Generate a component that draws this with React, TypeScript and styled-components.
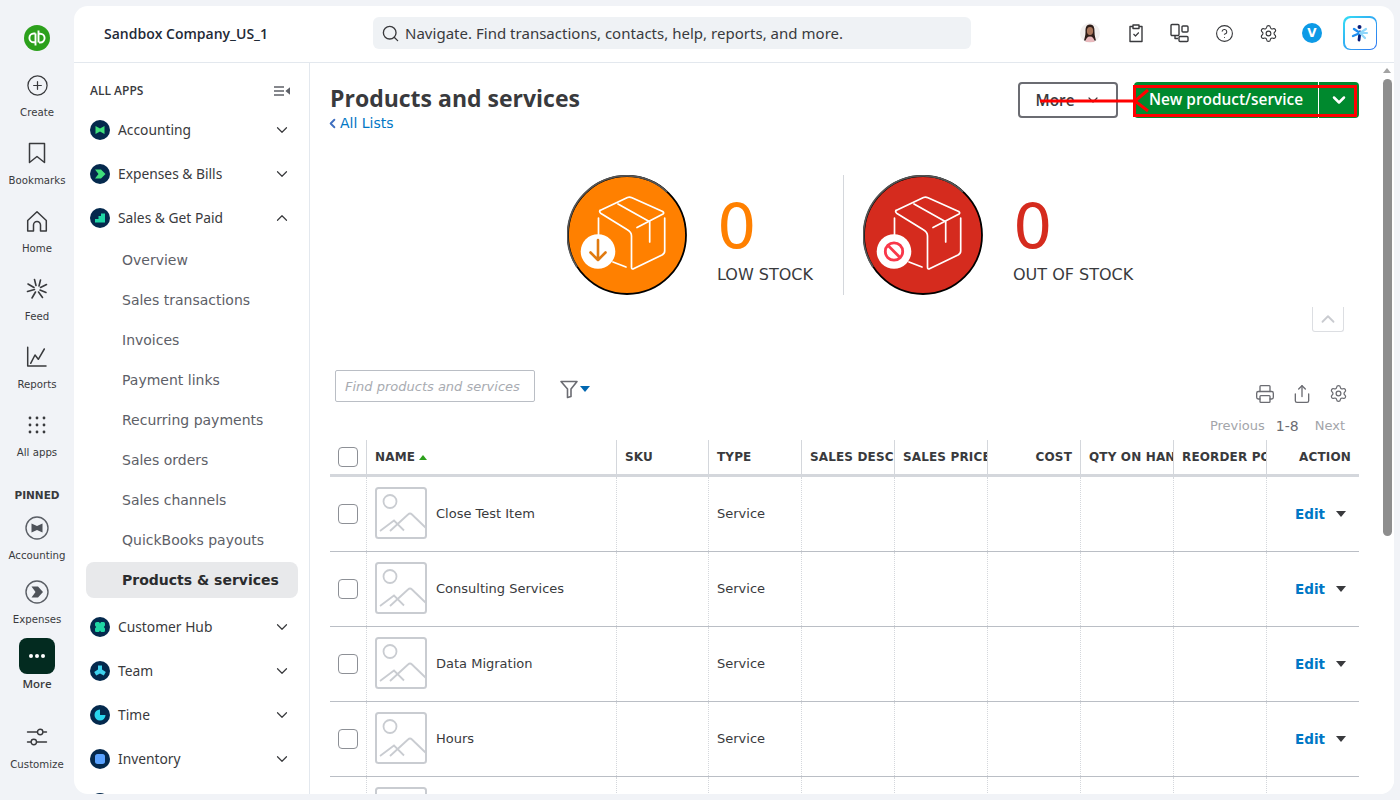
import * as React from 'react'
import styled, { createGlobalStyle } from 'styled-components'
import { ChevronDown, ChevronUp, ChevronLeft, PlusCircle, Settings, HelpCircle, Printer, Share, Search } from 'lucide-react'

const GlobalStyle = createGlobalStyle`
  html, body { margin: 0; padding: 0; height: 100%; overflow: hidden; background: #f1f3f7; }
  * { box-sizing: border-box; }
  #root { height: 800px; }
`

const Page = styled.div`
  display: flex;
  width: 1400px;
  height: 800px;
  padding: 6px 6px 6px 0;
  background: #f1f3f7;
  font-family: "DejaVu Sans", sans-serif;
  color: #393a3d;
`

const Rail = styled.nav`
  width: 74px;
  flex: none;
  display: flex;
  flex-direction: column;
  align-items: center;
`

const Logo = styled.div`
  margin: 19px 0 17px;
  width: 26px;
  height: 26px;
`

const RailItem = styled.div<{ $h?: number }>`
  height: ${p => p.$h ?? 68}px;
  width: 74px;
  flex: none;
  display: flex;
  flex-direction: column;
  align-items: center;
  color: #393a3d;
  svg { display: block; }
`

const RailIcon = styled.div`
  height: 34px;
  display: flex;
  align-items: center;
  justify-content: center;
`

const RailLabel = styled.span<{ $bold?: boolean }>`
  font-size: ${p => (p.$bold ? 11.5 : 10.2)}px;
  font-family: ${p => (p.$bold ? '"Open Sans"' : '"DejaVu Sans"')}, sans-serif;
  font-weight: ${p => (p.$bold ? 600 : 400)};
  line-height: 14px;
  margin-top: ${p => (p.$bold ? 3 : 4)}px;
  white-space: nowrap;
`

const PinnedTitle = styled.div`
  font-size: 10.5px;
  font-weight: 700;
  line-height: 14px;
  margin: 18px 0 9px;
`

const MoreTile = styled.div`
  width: 36px;
  height: 36px;
  flex: none;
  border-radius: 8px;
  background: #032b20;
  display: flex;
  align-items: center;
  justify-content: center;
  gap: 2px;
`

const Dot = styled.i`
  width: 4px;
  height: 4px;
  border-radius: 50%;
  background: #fff;
`

const Card = styled.div`
  flex: 1;
  min-width: 0;
  display: flex;
  flex-direction: column;
  background: #fff;
  border-radius: 14px;
  overflow: hidden;
`

const Header = styled.header`
  height: 57px;
  flex: none;
  display: flex;
  align-items: center;
  border-bottom: 1px solid #e3e8ee;
`

const Company = styled.div`
  width: 299px;
  flex: none;
  padding: 0 0 0 30px;
  margin-top: -2px;
  font-family: "Open Sans", sans-serif;
  font-size: 14px;
  font-weight: 600;
  color: #1f2a37;
`

const SearchBar = styled.div`
  width: 598px;
  height: 32px;
  margin-top: -2px;
  border-radius: 6px;
  background: #eff2f5;
  display: flex;
  align-items: center;
  gap: 5px;
  padding: 0 8px;
  font-family: "Noto Sans", sans-serif;
  font-size: 15px;
  letter-spacing: 0.02px;
  color: #393a3d;
`

const HeaderIcons = styled.div`
  display: flex;
  align-items: center;
  margin-left: auto;
  padding-right: 8px;
  margin-top: -2px;
`

const HeaderIcon = styled.div<{ $w?: number }>`
  width: ${p => p.$w ?? 44}px;
  display: flex;
  justify-content: center;
  align-items: center;
  color: #393a3d;
`

const AvatarV = styled.div`
  width: 20px;
  height: 20px;
  border-radius: 50%;
  background: #0d9ae6;
  color: #fff;
  font-size: 12px;
  font-weight: 700;
  display: flex;
  align-items: center;
  justify-content: center;
`

const AiTile = styled.div`
  width: 34px;
  height: 34px;
  border-radius: 7px;
  padding: 1.5px;
  background: linear-gradient(135deg, #35e0f5, #2d72f0);
  div {
    width: 100%;
    height: 100%;
    background: #fff;
    border-radius: 6px;
    display: flex;
    align-items: center;
    justify-content: center;
  }
`

const Body = styled.div`
  flex: 1;
  min-height: 0;
  display: flex;
`

const Side = styled.aside`
  width: 236px;
  flex: none;
  border-right: 1px solid #e3e8ee;
  overflow: hidden;
  padding: 0 11px 0 12px;
`

const SideTop = styled.div`
  height: 45px;
  padding: 21px 8px 0 4px;
  display: flex;
  align-items: flex-start;
  justify-content: space-between;
  font-family: "Open Sans", sans-serif;
  font-size: 12px;
  line-height: 14px;
  font-weight: 600;
  color: #393a3d;
`

const AppRow = styled.div`
  height: 44px;
  display: flex;
  align-items: center;
  gap: 8px;
  padding: 0 7px 0 4px;
  font-family: "Noto Sans", sans-serif;
  font-size: 13.8px;
  color: #393a3d;
  svg.chev { margin-left: auto; }
`

const AppLabel = styled.span`
  margin-bottom: 2px;
`

const AppBadge = styled.span`
  width: 20px;
  height: 20px;
  flex: none;
`

const SubList = styled.div`
  display: flex;
  flex-direction: column;
  margin-bottom: 7px;
`

const SubItem = styled.div<{ $active?: boolean }>`
  display: flex;
  align-items: center;
  padding-left: 36px;
  font-size: 14px;
  margin-top: ${p => (p.$active ? 2 : 0)}px;
  height: ${p => (p.$active ? 36 : 40)}px;
  color: ${p => (p.$active ? '#2b2c2e' : '#5d6067')};
  font-weight: ${p => (p.$active ? 700 : 400)};
  background: ${p => (p.$active ? '#e8e9eb' : 'transparent')};
  border-radius: ${p => (p.$active ? '8px' : '0')};
`

const Main = styled.main`
  flex: 1;
  min-width: 0;
  display: flex;
  position: relative;
`

const Content = styled.div`
  flex: 1;
  min-width: 0;
  padding: 19px 21px 0 20px;
  overflow: hidden;
`

const TitleRow = styled.div`
  display: flex;
  justify-content: space-between;
`

const Title = styled.h1`
  margin: 0;
  font-family: "Open Sans", sans-serif;
  font-size: 23px;
  font-weight: 700;
  line-height: 33px;
  color: #393a3d;
`

const BackLink = styled.a`
  display: flex;
  align-items: center;
  font-size: 14px;
  line-height: 18px;
  color: #0077c5;
  margin: -1px 0 0 -1px;
  svg { margin-left: -4px; color: #3f6fc0; }
`

const TitleActions = styled.div`
  display: flex;
  gap: 16px;
`

const MoreBtn = styled.div`
  width: 100px;
  height: 36px;
  border: 2px solid #6b6c72;
  border-radius: 4px;
  display: flex;
  align-items: center;
  justify-content: center;
  gap: 10px;
  font-family: "Open Sans", sans-serif;
  font-size: 15.4px;
  font-weight: 600;
  color: #393a3d;
`

const Primary = styled.div`
  width: 225px;
  height: 36px;
  display: flex;
  background: #00892e;
  border-radius: 4px;
  color: #fff;
  font-family: "Open Sans", sans-serif;
  font-size: 15.4px;
  font-weight: 600;
`

const PrimaryMain = styled.div`
  width: 185px;
  display: flex;
  align-items: center;
  justify-content: center;
  padding-bottom: 1px;
  border-right: 1px solid #fff;
`

const PrimaryCaret = styled.div`
  flex: 1;
  display: flex;
  align-items: center;
  justify-content: center;
`

const Annotation = styled.svg`
  position: absolute;
  left: 0;
  top: 0;
  width: 1084px;
  height: 120px;
  pointer-events: none;
`

const Stats = styled.section`
  display: flex;
  height: 120px;
  margin-top: 43px;
  padding-left: 237px;
`

const StatBlock = styled.div<{ $w: number }>`
  display: flex;
  width: ${p => p.$w}px;
`

const StatText = styled.div`
  margin-left: 30px;
  display: flex;
  flex-direction: column;
`

const StatNum = styled.div<{ $color: string }>`
  font-size: 62px;
  line-height: 74px;
  margin-top: 15px;
  color: ${p => p.$color};
`

const StatLabel = styled.div`
  font-size: 16px;
  line-height: 20px;
  margin-top: 1px;
  white-space: nowrap;
  color: #393a3d;
`

const Divider = styled.div`
  width: 1px;
  height: 120px;
  background: #d4d7dc;
  margin-right: 19px;
`

const CollapseRow = styled.div`
  display: flex;
  justify-content: flex-end;
  padding-right: 15px;
  margin-top: 12px;
  height: 25px;
`

const CollapseBtn = styled.div`
  width: 32px;
  height: 25px;
  border: 1px solid #dcdee2;
  border-top: none;
  border-radius: 0 0 3px 3px;
  display: flex;
  align-items: center;
  justify-content: center;
  color: #c9cbd0;
`

const Toolbar = styled.div`
  display: flex;
  justify-content: space-between;
  height: 50px;
  margin-top: 38px;
  padding: 0 14px 0 5px;
`

const SearchBox = styled.div`
  width: 200px;
  height: 32px;
  border: 1px solid #babec5;
  border-radius: 2px;
  display: flex;
  align-items: center;
  padding-left: 9px;
  font-size: 13px;
  font-style: italic;
  color: #a8abb1;
`

const ToolLeft = styled.div`
  display: flex;
  gap: 24px;
`

const FilterWrap = styled.div`
  height: 36px;
  padding-top: 2px;
  display: flex;
  align-items: center;
  gap: 1px;
`

const ToolRight = styled.div`
  display: flex;
  flex-direction: column;
  align-items: flex-end;
  margin-top: 14px;
`

const ToolIcons = styled.div`
  display: flex;
  gap: 17px;
  margin-right: -3px;
  color: #6b6c72;
  svg { display: block; }
`

const Pager = styled.div`
  display: flex;
  margin-top: 13px;
  font-size: 13px;
  line-height: 18px;
  color: #a3a5aa;
  b { font-weight: 400; font-size: 14px; color: #6b6c72; margin: 0 16px 0 11px; }
`

const Table = styled.div`
  margin-top: 20px;
`

const GRID = '36px 250px 92px 93px 93px 93px 93px 93px 93px 93px'

const HeadRow = styled.div`
  display: grid;
  grid-template-columns: ${GRID};
  height: 37px;
  border-bottom: 3px solid #d4d7dc;
`

const HeadCell = styled.div<{ $right?: boolean; $first?: boolean }>`
  display: flex;
  align-items: center;
  justify-content: ${p => (p.$right ? 'flex-end' : 'flex-start')};
  padding: ${p => (p.$right ? '0 8px' : '0 0 0 8px')};
  border-left: ${p => (p.$first ? 'none' : '1px solid #d4d7dc')};
  font-size: 12px;
  font-weight: 700;
  letter-spacing: 0.15px;
  color: #393a3d;
  overflow: hidden;
  white-space: nowrap;
`

const Row = styled.div`
  display: grid;
  grid-template-columns: ${GRID};
  height: 75px;
  border-bottom: 1px solid #babec5;
`

const Cell = styled.div<{ $first?: boolean }>`
  display: flex;
  align-items: center;
  padding: 0 0 1px 8px;
  border-left: ${p => (p.$first ? 'none' : '1px dotted #d4d7dc')};
  font-size: 13px;
  color: #393a3d;
`

const CheckBox = styled.span`
  width: 20px;
  height: 20px;
  border: 1px solid #8d9096;
  border-radius: 4px;
  background: #fff;
`

const NameWrap = styled.div`
  display: flex;
  align-items: center;
  gap: 9px;
  svg { margin-bottom: 2px; }
`

const EditCell = styled(Cell)`
  padding-left: 28px;
  gap: 11px;
  color: #0077c5;
  font-size: 13.5px;
  font-weight: 700;
`

const Caret = styled.i<{ $color?: string }>`
  width: 0;
  height: 0;
  border-left: 5px solid transparent;
  border-right: 5px solid transparent;
  border-top: 6px solid ${p => p.$color ?? '#393a3d'};
`

const SortUp = styled.i`
  width: 0;
  height: 0;
  margin-left: 4px;
  border-left: 4px solid transparent;
  border-right: 4px solid transparent;
  border-bottom: 5px solid #2ca01c;
`

const Scrollbar = styled.div`
  width: 14px;
  flex: none;
  display: flex;
  flex-direction: column;
  align-items: center;
  padding-top: 5px;
  background: #fff;
`

const ScrollArrow = styled.i`
  width: 0;
  height: 0;
  border-left: 4px solid transparent;
  border-right: 4px solid transparent;
  border-bottom: 5px solid #a3a3a3;
`

const ScrollThumb = styled.div`
  width: 9px;
  height: 457px;
  margin-top: 6px;
  border-radius: 5px;
  background: #8e8e8e;
`

const BADGE: Record<string, React.ReactNode> = {
  accounting: <path d="M5.5 6 L10 8.5 L14.5 6 V14 L10 11.5 L5.5 14 Z" fill="#3fe07c" />,
  expenses: <path d="M5 5.5 H11 L15.5 10 L11 14.5 H5 L8.5 10 Z" fill="#3fe07c" />,
  sales: <path d="M5 14.5 L5 11 H8.5 V8 H11 V5.5 H15 V14.5 Z" fill="#1fd6a5" />,
  customer: <path d="M7 5 H9 L10 6.5 L11 5 H13.5 Q15 5 15 6.5 V8.5 L13.8 10 L15 11.5 V13.5 Q15 15 13.5 15 H11 L10 13.5 L9 15 H6.5 Q5 15 5 13.5 V11.5 L6.2 10 L5 8.5 V6.5 Q5 5 7 5 Z" fill="#1fd6a5" />,
  team: <path d="M8 4.5 H12 L12 8.5 L15.8 11 L13.8 14.6 L10 12.4 L6.2 14.6 L4.2 11 L8 8.5 Z" fill="#3fd2ee" />,
  time: <path d="M10 4.5 V10 H15.5 A5.5 5.5 0 1 1 10 4.5 Z" fill="#2ad6ee" />,
  inventory: <rect x="5" y="5" width="10" height="10" rx="2.5" fill="#5aa2ff" />,
}

function Badge({ kind }: { kind: string }) {
  return (
    <AppBadge>
      <svg width="20" height="20" viewBox="0 0 20 20">
        <circle cx="10" cy="10" r="10" fill="#04294d" />
        {BADGE[kind]}
      </svg>
    </AppBadge>
  )
}

function AppEntry({ kind, label, open }: { kind: string; label: string; open?: boolean }) {
  return (
    <AppRow>
      <Badge kind={kind} />
      <AppLabel>{label}</AppLabel>
      {open
        ? <ChevronUp className="chev" size={18} strokeWidth={1.6} color="#393a3d" />
        : <ChevronDown className="chev" size={18} strokeWidth={1.6} color="#393a3d" />}
    </AppRow>
  )
}

function Thumb() {
  return (
    <svg width="52" height="52" viewBox="0 0 52 52" fill="none" stroke="#c9ccd1" strokeWidth="1.8">
      <rect x="1" y="1" width="50" height="50" rx="2.5" strokeWidth="2" />
      <circle cx="15" cy="14.5" r="6.5" />
      <path d="M5 44 L19 33.5 L29 43.5" />
      <path d="M15 44 L33 27.5 Q35 25.5 37 27.5 L51 41" />
    </svg>
  )
}

function StockIcon({ bg, children }: { bg: string; children: React.ReactNode }) {
  return (
    <svg width="120" height="120" viewBox="0 0 120 120">
      <circle cx="60" cy="60" r="59" fill={bg} stroke="#000" strokeWidth="1.8" />
      <path d="M10 92 A59 59 0 0 1 100 17" fill="none" stroke="#555" strokeWidth="1.8" />
      <g fill="none" stroke="#fff" strokeWidth="1.7" strokeLinecap="round" strokeLinejoin="round">
        <path d="M33 35.5 L60.5 22.5 Q62.7 21.8 65 22.8 L95.7 36.5 Q97.5 38 96 39 L70 52.5" />
        <path d="M33 35.5 Q32 37 34 38.5 L60 54.5 Q64.5 57 64.5 61 V92 Q64.5 95 67 93.5 L95 80 Q97.7 78.5 97.7 76 V43" />
        <path d="M51 29 L82.7 46.7 V67" />
        <path d="M31.5 43 V60" />
        <path d="M46 87 L59 92" />
      </g>
      <circle cx="31" cy="76.5" r="17.3" fill="#fff" />
      {children}
    </svg>
  )
}

const NAV_ITEMS = ['Overview', 'Sales transactions', 'Invoices', 'Payment links', 'Recurring payments', 'Sales orders', 'Sales channels', 'QuickBooks payouts']
const COLUMNS = ['SKU', 'TYPE', 'SALES DESC', 'SALES PRICE']
const ROWS = ['Close Test Item', 'Consulting Services', 'Data Migration', 'Hours', '']

export default function App() {
  return (
    <>
      <GlobalStyle />
      <Page>
        <Rail>
          <Logo>
            <svg width="26" height="26" viewBox="0 0 26 26">
              <circle cx="13" cy="13" r="13" fill="#2ca01c" />
              <g fill="none" stroke="#fff" strokeWidth="1.9">
                <path d="M11.5 8.5 H9.8 A4.4 4.4 0 0 0 9.8 17.3 H11" />
                <path d="M11.5 8.5 V20.5" />
                <path d="M14.5 5.5 V17.5" />
                <path d="M14.5 8.7 H16.2 A4.4 4.4 0 0 1 16.2 17.5 H15" />
              </g>
            </svg>
          </Logo>
          <RailItem>
            <RailIcon><PlusCircle size={23} strokeWidth={1.3} /></RailIcon>
            <RailLabel>Create</RailLabel>
          </RailItem>
          <RailItem>
            <RailIcon>
              <svg width="24" height="24" viewBox="0 0 24 24" fill="none" stroke="#393a3d" strokeWidth="1.5" strokeLinejoin="round">
                <path d="M4.5 2.5 H19.5 V21.5 L12 15.5 L4.5 21.5 Z" />
              </svg>
            </RailIcon>
            <RailLabel>Bookmarks</RailLabel>
          </RailItem>
          <RailItem>
            <RailIcon>
              <svg width="24" height="24" viewBox="0 0 24 24" fill="none" stroke="#393a3d" strokeWidth="1.5" strokeLinejoin="round">
                <path d="M2.7 22 V11.5 L12 2.7 L21.3 11.5 V22 H15.5 V16 A3.5 3.5 0 0 0 8.5 16 V22 Z" />
              </svg>
            </RailIcon>
            <RailLabel>Home</RailLabel>
          </RailItem>
          <RailItem>
            <RailIcon>
              <svg width="24" height="24" viewBox="0 0 24 24" fill="none" stroke="#393a3d" strokeWidth="1.6" strokeLinecap="round">
                <path d="M9.5 2.5 L11 8.5 M15.5 3 L14 9 M3 7 L9 10.5 M21.5 7.5 L15.5 10.5 M2.5 14.5 L9.5 12.5 M21 15.5 L15 13 M7 21 L10.5 15 M17.5 20.5 L13.5 15" />
              </svg>
            </RailIcon>
            <RailLabel>Feed</RailLabel>
          </RailItem>
          <RailItem>
            <RailIcon>
              <svg width="24" height="24" viewBox="0 0 24 24" fill="none" stroke="#393a3d" strokeWidth="1.5" strokeLinecap="round" strokeLinejoin="round">
                <path d="M2.7 2.3 V21 H21" />
                <path d="M5.7 18.3 L10 10 L13.3 14.3 L19.3 4" />
              </svg>
            </RailIcon>
            <RailLabel>Reports</RailLabel>
          </RailItem>
          <RailItem $h={62}>
            <RailIcon>
              <svg width="20" height="20" viewBox="0 0 20 20" fill="#393a3d">
                {[3, 10, 17].flatMap(y => [3, 10, 17].map(x => <circle key={`${x}-${y}`} cx={x} cy={y} r="1.4" />))}
              </svg>
            </RailIcon>
            <RailLabel>All apps</RailLabel>
          </RailItem>
          <PinnedTitle>PINNED</PinnedTitle>
          <RailItem $h={64}>
            <RailIcon>
              <svg width="24" height="24" viewBox="0 0 24 24">
                <circle cx="12" cy="12" r="11" fill="none" stroke="#5b5f66" strokeWidth="1.4" />
                <path d="M6.5 7.5 L12 10 L17.5 7.5 V16.5 L12 14 L6.5 16.5 Z" fill="#4f535a" />
              </svg>
            </RailIcon>
            <RailLabel>Accounting</RailLabel>
          </RailItem>
          <RailItem $h={63}>
            <RailIcon>
              <svg width="24" height="24" viewBox="0 0 24 24">
                <circle cx="12" cy="12" r="11" fill="none" stroke="#5b5f66" strokeWidth="1.4" />
                <path d="M6.5 6.5 H13 L18 12 L13 17.5 H6.5 L10.5 12 Z" fill="#4f535a" />
              </svg>
            </RailIcon>
            <RailLabel>Expenses</RailLabel>
          </RailItem>
          <RailItem $h={82}>
            <MoreTile><Dot /><Dot /><Dot /></MoreTile>
            <RailLabel $bold>More</RailLabel>
          </RailItem>
          <RailItem>
            <RailIcon>
              <svg width="22" height="22" viewBox="0 0 22 22" fill="none" stroke="#393a3d" strokeWidth="1.4" strokeLinecap="round">
                <path d="M1.5 6 H11 M17.5 6 H20.5 M1.5 16 H4.5 M11 16 H20.5" />
                <circle cx="14.2" cy="6" r="2.7" />
                <circle cx="7.8" cy="16" r="2.7" />
              </svg>
            </RailIcon>
            <RailLabel>Customize</RailLabel>
          </RailItem>
        </Rail>
        <Card>
          <Header>
            <Company>Sandbox Company_US_1</Company>
            <SearchBar>
              <Search size={19} strokeWidth={1.7} />
              Navigate. Find transactions, contacts, help, reports, and more.
            </SearchBar>
            <HeaderIcons>
              <HeaderIcon $w={48}>
                <svg width="20" height="20" viewBox="0 0 20 20">
                  <circle cx="10" cy="10" r="10" fill="#f1efee" />
                  <path d="M10 1.5 C5.5 1.5 5.5 6 5.5 9 C5.5 13 4.5 15 4 17.5 H16 C15.5 15 14.5 13 14.500 9 C14.500 6 14.500 1.500 10 1.500 Z" fill="#2e1d18" />
                  <ellipse cx="10" cy="8" rx="3.1" ry="4" fill="#a9765b" />
                  <path d="M5.5 19 Q6 13.500 10 13.500 Q14 13.500 14.500 19 Z" fill="#e9b9bd" />
                </svg>
              </HeaderIcon>
              <HeaderIcon>
                <svg width="22" height="22" viewBox="0 0 22 22" fill="none" stroke="#393a3d" strokeWidth="1.4" strokeLinejoin="round">
                  <path d="M8 4.5 H5 V19.5 H17 V4.5 H14" />
                  <path d="M8 3 H14 V6.5 H8 Z" />
                  <path d="M8.5 12 L10.5 14 L13.8 10.5" strokeWidth="1.2" />
                </svg>
              </HeaderIcon>
              <HeaderIcon>
                <svg width="22" height="22" viewBox="0 0 22 22" fill="none" stroke="#393a3d" strokeWidth="1.4" strokeLinejoin="round">
                  <rect x="2" y="2.5" width="8" height="11" rx="1" />
                  <rect x="13" y="4" width="6" height="6" rx="1" />
                  <path d="M6 13.5 V16.5 H9" />
                  <rect x="10" y="14.5" width="9" height="5" rx="1" />
                </svg>
              </HeaderIcon>
              <HeaderIcon><HelpCircle size={19} strokeWidth={1.4} /></HeaderIcon>
              <HeaderIcon><Settings size={19} strokeWidth={1.4} /></HeaderIcon>
              <HeaderIcon><AvatarV>V</AvatarV></HeaderIcon>
              <HeaderIcon $w={52}>
                <AiTile>
                  <div>
                    <svg width="18" height="18" viewBox="0 0 18 18" strokeLinecap="round">
                      <circle cx="8.5" cy="3" r="2" fill="#0a1f7a" />
                      <path d="M9 8 L8 16" stroke="#0a1f7a" strokeWidth="2.8" />
                      <path d="M9 9 L3 5 M9 9 L2 12" stroke="#1f8ef0" strokeWidth="2.4" />
                      <path d="M9 9 L15 5 M9 9 L16 9 M9 9 L14 14" stroke="#8fd6fa" strokeWidth="2.2" />
                    </svg>
                  </div>
                </AiTile>
              </HeaderIcon>
            </HeaderIcons>
          </Header>
          <Body>
            <Side>
              <SideTop>
                ALL APPS
                <svg width="16" height="14" viewBox="0 0 16 14" fill="none" stroke="#5d6067" strokeWidth="1.4">
                  <path d="M0 3 H10 M0 7 H10 M0 11 H10" />
                  <path d="M15.5 4.5 L12.5 7 L15.5 9.5 Z" fill="#5d6067" />
                </svg>
              </SideTop>
              <AppEntry kind="accounting" label="Accounting" />
              <AppEntry kind="expenses" label="Expenses & Bills" />
              <AppEntry kind="sales" label="Sales & Get Paid" open />
              <SubList>
                {NAV_ITEMS.map(item => <SubItem key={item}>{item}</SubItem>)}
                <SubItem $active>Products & services</SubItem>
              </SubList>
              <AppEntry kind="customer" label="Customer Hub" />
              <AppEntry kind="team" label="Team" />
              <AppEntry kind="time" label="Time" />
              <AppEntry kind="inventory" label="Inventory" />
              <AppRow><Badge kind="none" /></AppRow>
            </Side>
            <Main>
              <Content>
                <TitleRow>
                  <div>
                    <Title>Products and services</Title>
                    <BackLink><ChevronLeft size={15} strokeWidth={3} />All Lists</BackLink>
                  </div>
                  <TitleActions>
                    <MoreBtn>More<ChevronDown size={16} strokeWidth={1.8} /></MoreBtn>
                    <Primary>
                      <PrimaryMain>New product/service</PrimaryMain>
                      <PrimaryCaret><ChevronDown size={20} strokeWidth={3} /></PrimaryCaret>
                    </Primary>
                  </TitleActions>
                </TitleRow>
                <Stats>
                  <StatBlock $w={276}>
                    <StockIcon bg="#ff8000">
                      <path d="M31 65 V85 M23.5 77.5 L31 85 L38.5 77.5" fill="none" stroke="#e07a10" strokeWidth="2.6" strokeLinecap="round" strokeLinejoin="round" />
                    </StockIcon>
                    <StatText>
                      <StatNum $color="#ff8000">0</StatNum>
                      <StatLabel>LOW STOCK</StatLabel>
                    </StatText>
                  </StatBlock>
                  <Divider />
                  <StatBlock $w={300}>
                    <StockIcon bg="#d52b1e">
                      <g fill="none" stroke="#f9384a" strokeWidth="2.8">
                        <circle cx="31" cy="76.5" r="8.7" />
                        <path d="M24.8 70.3 L37.2 82.7" />
                      </g>
                    </StockIcon>
                    <StatText>
                      <StatNum $color="#d52b1e">0</StatNum>
                      <StatLabel>OUT OF STOCK</StatLabel>
                    </StatText>
                  </StatBlock>
                </Stats>
                <CollapseRow>
                  <CollapseBtn><ChevronUp size={22} strokeWidth={2} /></CollapseBtn>
                </CollapseRow>
                <Toolbar>
                  <ToolLeft>
                    <SearchBox>Find products and services</SearchBox>
                    <FilterWrap>
                      <svg width="20" height="20" viewBox="0 0 20 20" fill="none" stroke="#6b6c72" strokeWidth="1.6" strokeLinejoin="round">
                        <path d="M2 2.5 H18 L12 10 V17.5 L8.5 18.5 V10 Z" />
                      </svg>
                      <Caret $color="#0067b0" />
                    </FilterWrap>
                  </ToolLeft>
                  <ToolRight>
                    <ToolIcons>
                      <Printer size={20} strokeWidth={1.6} />
                      <Share size={20} strokeWidth={1.6} />
                      <Settings size={19} strokeWidth={1.6} />
                    </ToolIcons>
                    <Pager><span>Previous</span><b>1-8</b><span>Next</span></Pager>
                  </ToolRight>
                </Toolbar>
                <Table>
                  <HeadRow>
                    <HeadCell $first><CheckBox /></HeadCell>
                    <HeadCell>NAME<SortUp /></HeadCell>
                    {COLUMNS.map(c => <HeadCell key={c}>{c}</HeadCell>)}
                    <HeadCell $right>COST</HeadCell>
                    <HeadCell>QTY ON HAND</HeadCell>
                    <HeadCell>REORDER POINT</HeadCell>
                    <HeadCell $right>ACTION</HeadCell>
                  </HeadRow>
                  {ROWS.map((name, i) => (
                    <Row key={i}>
                      <Cell $first>{name && <CheckBox />}</Cell>
                      <Cell><NameWrap><Thumb />{name}</NameWrap></Cell>
                      <Cell />
                      <Cell>{name && 'Service'}</Cell>
                      <Cell /><Cell /><Cell /><Cell /><Cell />
                      {name ? <EditCell>Edit<Caret /></EditCell> : <Cell />}
                    </Row>
                  ))}
                </Table>
              </Content>
              <Annotation viewBox="0 0 1084 120">
                <g fill="none" stroke="#f00" strokeWidth="3">
                  <path d="M730 38 H825" />
                  <path d="M825 38 L838 27 M825 38 L838 48" />
                  <rect x="824.5" y="23.5" width="221" height="29" />
                </g>
              </Annotation>
              <Scrollbar>
                <ScrollArrow />
                <ScrollThumb />
              </Scrollbar>
            </Main>
          </Body>
        </Card>
      </Page>
    </>
  )
}
